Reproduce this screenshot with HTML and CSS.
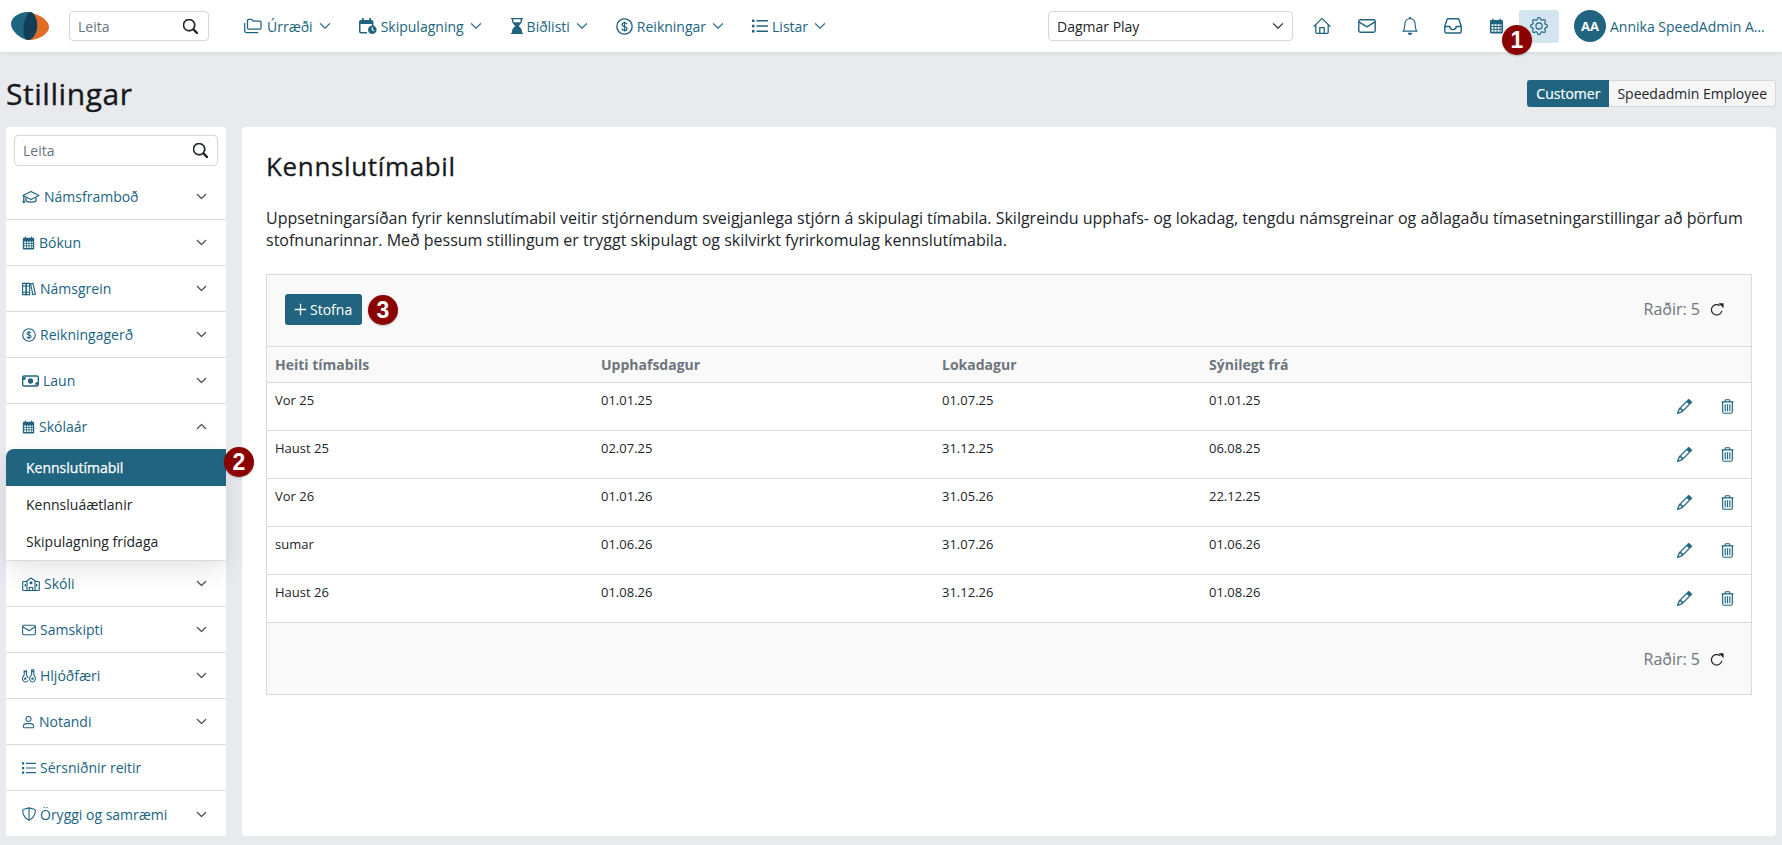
FILE: index.html
```html
<!DOCTYPE html>
<html lang="is">
<head>
<meta charset="utf-8">
<title>Stillingar</title>
<link rel="stylesheet" href="styles.css">
</head>
<body>
<svg class="sprite" xmlns="http://www.w3.org/2000/svg">
  <symbol id="i-search" viewBox="0 0 16 16"><path fill="currentColor" stroke="currentColor" stroke-width=".7" d="M11.742 10.344a6.5 6.5 0 1 0-1.397 1.398h-.001c.03.04.062.078.098.115l3.85 3.85a1 1 0 0 0 1.415-1.414l-3.85-3.85a1.007 1.007 0 0 0-.115-.1zM12 6.5a5.5 5.5 0 1 1-11 0 5.5 5.5 0 0 1 11 0z"/></symbol>
  <symbol id="i-down" viewBox="0 0 16 16"><path fill="currentColor" stroke="currentColor" stroke-width=".8" d="M1.646 4.646a.5.5 0 0 1 .708 0L8 10.293l5.646-5.647a.5.5 0 0 1 .708.708l-6 6a.5.5 0 0 1-.708 0l-6-6a.5.5 0 0 1 0-.708z"/></symbol>
  <symbol id="i-up" viewBox="0 0 16 16"><path fill="currentColor" stroke="currentColor" stroke-width=".8" d="M1.646 11.354a.5.5 0 0 0 .708 0L8 5.707l5.646 5.647a.5.5 0 0 0 .708-.708l-6-6a.5.5 0 0 0-.708 0l-6 6a.5.5 0 0 0 0 .708z"/></symbol>
  <symbol id="i-folders" viewBox="0 0 18 16"><g fill="none" stroke="currentColor" stroke-width="1.250" stroke-linejoin="round"><path d="M3.500 3V2.400c0-.6.4-1 1-1h3.200l1.500 1.600h6.800c.6 0 1 .4 1 1V10c0 .6-.4 1-1 1H4.500c-.6 0-1-.4-1-1z"/><path d="M.7 5v8c0 .9.6 1.500 1.500 1.500h12"/></g></symbol>
  <symbol id="i-calclock" viewBox="0 0 18 16"><path fill="currentColor" d="M3 0h1.700v2h5.600V0H12v2h.3c1.300 0 2.200.9 2.200 2.200V8h-1.500V6H1.500v7.300c0 .4.300.7.7.7H8v1.500H2.200C.9 15.500 0 14.600 0 13.300V4.200C0 2.900.9 2 2.200 2H3z"/><circle cx="13.300" cy="11.700" r="4.300" fill="currentColor"/><path d="M13.300 9.300v2.500l1.700 1" fill="none" stroke="#fff" stroke-width="1.100"/></symbol>
  <symbol id="i-hourglass" viewBox="0 0 14 16"><path fill="currentColor" d="M1 0h12v1.300h-1v1.500c0 2-1.500 3.700-3.300 5.200C10.500 9.500 12 11.200 12 13.200v1.500h1V16H1v-1.300h1v-1.500c0-2 1.500-3.700 3.300-5.200C3.500 6.500 2 4.800 2 2.800V1.300H1z"/><path fill="#fff" d="M3.400 1.300h7.200v1.500c0 .5-.1 1-.3 1.500H3.700c-.2-.5-.3-1-.3-1.500z"/></symbol>
  <symbol id="i-dollar" viewBox="0 0 16 16"><circle cx="8" cy="8" r="7.200" fill="none" stroke="currentColor" stroke-width="1.300"/><path fill="none" stroke="currentColor" stroke-width="1.200" d="M10.300 5.900C10 4.900 9 4.500 8 4.500c-1.200 0-2.300.6-2.300 1.800 0 2.500 4.700 1 4.700 3.500 0 1.200-1.200 1.800-2.400 1.800-1.100 0-2.200-.5-2.500-1.600M8 3.300v9.400"/></symbol>
  <symbol id="i-list" viewBox="0 0 16 16"><path fill="currentColor" d="M0 1.500h2.500V4H0zM0 6.800h2.500v2.500H0zM0 12h2.500v2.500H0zM4.500 2h11.500v1.400H4.500zM4.500 7.300h11.500v1.400H4.500zM4.500 12.600h11.500v1.400H4.500z"/></symbol>
  <symbol id="i-house" viewBox="0 0 16 16"><g fill="none" stroke="currentColor" stroke-width="1.150" stroke-linecap="round" stroke-linejoin="round"><path d="M.8 8.300 7.300 1.900a1 1 0 0 1 1.400 0l6.500 6.400"/><path d="M2.500 6.900v6.700c0 .6.400 1 1 1h9c.6 0 1-.4 1-1V6.900"/><path d="M6 14.500V9.500h4v5"/></g></symbol>
  <symbol id="i-mail" viewBox="0 0 16 16"><g fill="none" stroke="currentColor" stroke-width="1.250" stroke-linejoin="round"><rect x=".7" y="2.500" width="14.600" height="11" rx="1.400"/><path d="m.9 4.300 7.100 4.500 7.100-4.500"/></g></symbol>
  <symbol id="i-bell" viewBox="0 0 16 16"><path fill="currentColor" d="M8 16a2 2 0 0 0 2-2H6a2 2 0 0 0 2 2zM8 1.918l-.797.161A4.002 4.002 0 0 0 4 6c0 .628-.134 2.197-.459 3.742-.16.767-.376 1.566-.663 2.258h10.244c-.287-.692-.502-1.490-.663-2.258C12.134 8.197 12 6.628 12 6a4.002 4.002 0 0 0-3.203-3.920L8 1.917zM14.220 12c.223.447.481.801.78 1H1c.299-.199.557-.553.78-1C2.680 10.200 3 6.880 3 6c0-2.420 1.720-4.440 4.005-4.901a1 1 0 1 1 1.990 0A5.002 5.002 0 0 1 13 6c0 .880.320 4.200 1.220 6z"/></symbol>
  <symbol id="i-inbox" viewBox="0 0 16 16"><g fill="none" stroke="currentColor" stroke-width="1.250" stroke-linejoin="round"><path d="M3.700 1.500h8.600c.5 0 .9.300 1 .7l2 6v4.600c0 .8-.6 1.400-1.400 1.400H2.100c-.8 0-1.400-.6-1.400-1.400V8.200l2-6c.1-.4.500-.7 1-.7z"/><path d="M.8 8.500h4.400c0 3.600 5.600 3.600 5.600 0h4.400"/></g></symbol>
  <symbol id="i-cal" viewBox="0 0 16 16"><path fill="currentColor" fill-rule="evenodd" d="M3.500 0h1.300v1.500h6.400V0h1.300v1.500h1c.9 0 1.500.6 1.500 1.500v11.500c0 .9-.6 1.500-1.500 1.500h-11c-.9 0-1.500-.6-1.500-1.500V3c0-.9.6-1.500 1.500-1.500h1zM2.700 6v2h2.200V6zm3.200 0v2h2.200V6zm3.200 0v2h2.200V6zm3.100 0v2h1.100V6zM2.700 9v2h2.200V9zm3.200 0v2h2.200V9zm3.200 0v2h2.200V9zm3.100 0v2h1.100V9zM2.700 12v2h2.200v-2zm3.200 0v2h2.200v-2zm3.200 0v2h2.200v-2zm3.100 0v2h1.100v-2z"/></symbol>
  <symbol id="i-gear" viewBox="0 0 16 16"><path fill="currentColor" d="M8 4.754a3.246 3.246 0 1 0 0 6.492 3.246 3.246 0 0 0 0-6.492zM5.754 8a2.246 2.246 0 1 1 4.492 0 2.246 2.246 0 0 1-4.492 0z"/><path fill="currentColor" d="M9.796 1.343c-.527-1.790-3.065-1.790-3.592 0l-.094.319a.873.873 0 0 1-1.255.52l-.292-.16c-1.640-.892-3.433.902-2.540 2.541l.159.292a.873.873 0 0 1-.52 1.255l-.319.094c-1.790.527-1.790 3.065 0 3.592l.319.094a.873.873 0 0 1 .52 1.255l-.16.292c-.892 1.640.901 3.434 2.541 2.540l.292-.159a.873.873 0 0 1 1.255.52l.094.319c.527 1.790 3.065 1.790 3.592 0l.094-.319a.873.873 0 0 1 1.255-.52l.292.16c1.640.893 3.434-.902 2.540-2.541l-.159-.292a.873.873 0 0 1 .52-1.255l.319-.094c1.790-.527 1.790-3.065 0-3.592l-.319-.094a.873.873 0 0 1-.52-1.255l.16-.292c.893-1.640-.902-3.433-2.541-2.540l-.292.159a.873.873 0 0 1-1.255-.52l-.094-.319zm-2.633.283c.246-.835 1.428-.835 1.674 0l.094.319a1.873 1.873 0 0 0 2.693 1.115l.291-.16c.764-.415 1.600.42 1.184 1.185l-.159.292a1.873 1.873 0 0 0 1.116 2.692l.318.094c.835.246.835 1.428 0 1.674l-.319.094a1.873 1.873 0 0 0-1.115 2.693l.16.291c.415.764-.42 1.600-1.185 1.184l-.291-.159a1.873 1.873 0 0 0-2.693 1.116l-.094.318c-.246.835-1.428.835-1.674 0l-.094-.319a1.873 1.873 0 0 0-2.692-1.115l-.292.16c-.764.415-1.600-.42-1.184-1.185l.159-.291A1.873 1.873 0 0 0 1.945 8.930l-.319-.094c-.835-.246-.835-1.428 0-1.674l.319-.094A1.873 1.873 0 0 0 3.060 4.377l-.16-.292c-.415-.764.42-1.600 1.185-1.184l.292.159a1.873 1.873 0 0 0 2.692-1.115l.094-.319z"/></symbol>
  <symbol id="i-cap" viewBox="0 0 18 16"><g fill="none" stroke="currentColor" stroke-width="1.250" stroke-linejoin="round"><path d="M9 2.500 1 6.500l8 4 8-4z"/><path d="M4 8.500v3.500c1.500 1.500 8.500 1.500 10 0V8.500"/><path d="M1.800 7v5"/></g><circle cx="1.800" cy="13" r="1.300" fill="currentColor"/></symbol>
  <symbol id="i-books" viewBox="0 0 16 16"><g fill="none" stroke="currentColor" stroke-width="1.300" stroke-linejoin="round"><rect x=".7" y="1.500" width="4" height="13"/><rect x="4.700" y="1.500" width="4" height="13"/><path d="m9.800 2.200 2.800-.6 2.700 12.300-2.900.7z"/></g><path fill="currentColor" d="M.7 4h8v1.200h-8zM.7 11h8v1.200h-8z"/></symbol>
  <symbol id="i-cash" viewBox="0 0 18 16"><rect x=".7" y="2.700" width="16.600" height="10.600" rx="1.500" fill="none" stroke="currentColor" stroke-width="1.400"/><path fill="currentColor" d="M.7 4h3.500a3 3 0 0 1-3 3zM17.300 12h-3.500a3 3 0 0 1 3-3z"/><circle cx="9" cy="8" r="2.800" fill="currentColor"/></symbol>
  <symbol id="i-school" viewBox="0 0 18 16"><g fill="none" stroke="currentColor" stroke-width="1.150" stroke-linejoin="round"><path d="M5 5.500H1.500c-.5 0-.8.3-.8.800v7.400c0 .5.3.8.8.8h15c.5 0 .8-.3.8-.8V6.300c0-.5-.3-.8-.8-.8H13"/><path d="M5 14.500V4.700L9 2l4 2.700v9.800"/><path d="M7.300 14.500v-3h3.400v3"/></g><circle cx="9" cy="6.800" r="1.500" fill="currentColor"/><path fill="currentColor" d="M2.700 8h1.300v2.500H2.700zM14 8h1.300v2.500H14z"/></symbol>
  <symbol id="i-instr" viewBox="0 0 16 16"><g fill="none" stroke="currentColor" stroke-width="1.200" stroke-linejoin="round"><path d="M2.500 1v5.500L.9 9.500c-.8 2.500.6 5.300 3 5.300 1.500 0 2.500-.8 3-1.800M5 1v5.500l2.200 4"/><path d="M11 1v5.500L9 9.500c-.8 2.500.6 5.300 3 5.300s3.700-2.800 3-5.300l-1.500-3V1z"/><path d="M2.500 3H5M11 3h2.500"/></g><circle cx="3.700" cy="11" r="1.400" fill="currentColor"/><circle cx="12" cy="11" r="1.400" fill="currentColor"/></symbol>
  <symbol id="i-person" viewBox="0 0 16 16"><g fill="none" stroke="currentColor" stroke-width="1.250"><circle cx="8" cy="4.300" r="3.100"/><path d="M1.500 14.300c0-2.800 2-4.300 4-4.300h5c2 0 4 1.500 4 4.300 0 .5-.3.8-.8.8H2.300c-.5 0-.8-.3-.8-.8z"/></g></symbol>
  <symbol id="i-shield" viewBox="0 0 16 16"><path fill="none" stroke="currentColor" stroke-width="1.300" stroke-linejoin="round" d="M8 1 2 2.500c-.8.2-1.200.7-1.200 1.400C.8 9.800 4.700 13.800 8 15c3.300-1.200 7.200-5.200 7.200-11.100 0-.7-.4-1.200-1.200-1.400z"/><path fill="none" stroke="currentColor" stroke-width="1.300" d="M8 1v14"/></symbol>
  <symbol id="i-plus" viewBox="0 0 16 16"><path fill="currentColor" d="M7.200 1h1.600v6.200H15v1.600H8.800V15H7.200V8.800H1V7.200h6.200z"/></symbol>
  <symbol id="i-refresh" viewBox="0 0 16 16"><path fill="none" stroke="currentColor" stroke-width="1.400" d="M11.300 4.100A6 6 0 1 0 13.600 10"/><path fill="currentColor" d="M9.800 1.500h5.700v5.700z"/></symbol>
  <symbol id="i-pencil" viewBox="0 0 16 16"><path fill="currentColor" stroke="currentColor" stroke-width=".5" d="M12.146.146a.5.5 0 0 1 .708 0l3 3a.5.5 0 0 1 0 .708l-10 10a.5.5 0 0 1-.168.11l-5 2a.5.5 0 0 1-.65-.65l2-5a.5.5 0 0 1 .11-.168l10-10zM11.207 2.500 13.500 4.793 14.793 3.500 12.500 1.207 11.207 2.500zm1.586 3L10.500 3.207 4 9.707V10h.5a.5.5 0 0 1 .5.5v.5h.5a.5.5 0 0 1 .5.5v.5h.293l6.500-6.500zm-9.761 5.175-.106.106-1.528 3.821 3.821-1.528.106-.106A.5.5 0 0 1 5 12.500V12h-.5a.5.5 0 0 1-.5-.5V11h-.5a.5.5 0 0 1-.468-.325z"/><path fill="currentColor" d="m11 2.500 1.500-2 3 3-2 1.500z"/></symbol>
  <symbol id="i-trash" viewBox="0 0 14 16"><g fill="none" stroke="currentColor" stroke-width="1.250" stroke-linejoin="round"><path d="M.6 3h12.800M4.500 3V1.500c0-.4.3-.8.8-.8h3.400c.5 0 .8.400.8.8V3"/><path d="M1.800 3v10.700c0 .9.600 1.600 1.500 1.600h7.400c.9 0 1.500-.7 1.500-1.600V3"/><path d="M4.500 5.500v7.500M7 5.500v7.500M9.500 5.500v7.500"/></g></symbol>
</svg>

<header class="topbar">
  <svg class="logo" viewBox="0 0 38 28" xmlns="http://www.w3.org/2000/svg" aria-label="Logo">
    <path fill="#e06c25" d="M16 1C26 0 38 8 38 15c0 7-11 13-20 13-3 0-5-1-6-3z"/>
    <path fill="#1f6480" d="M20 0C11-1 0 4 0 12c0 7 9 14 16 16 6-5 8-22 4-28z"/>
    <path fill="#123f57" d="M20 0c5 2 7 10 6 17-1 5-4 10-8 11-2 0-3-1-4-2-2-4-2-12 0-18 1-4 3-7 6-8z"/>
  </svg>
  <label class="search search-top">
    <span class="search-text">Leita</span>
    <svg class="ic-search"><use href="#i-search"/></svg>
  </label>
  <nav class="mainnav">
    <a class="navitem"><svg class="ic ic-w18 ic-m5"><use href="#i-folders"/></svg>Úrræði<svg class="chev"><use href="#i-down"/></svg></a>
    <a class="navitem"><svg class="ic ic-w18"><use href="#i-calclock"/></svg>Skipulagning<svg class="chev"><use href="#i-down"/></svg></a>
    <a class="navitem"><svg class="ic ic-w14"><use href="#i-hourglass"/></svg>Biðlisti<svg class="chev"><use href="#i-down"/></svg></a>
    <a class="navitem"><svg class="ic ic-w17"><use href="#i-dollar"/></svg>Reikningar<svg class="chev"><use href="#i-down"/></svg></a>
    <a class="navitem"><svg class="ic"><use href="#i-list"/></svg>Listar<svg class="chev"><use href="#i-down"/></svg></a>
  </nav>
  <div class="topright">
    <div class="select"><span>Dagmar Play</span><svg class="select-chev"><use href="#i-down"/></svg></div>
    <div class="iconbar">
      <a class="iconbtn"><svg class="ic-top ic-house"><use href="#i-house"/></svg></a>
      <a class="iconbtn"><svg class="ic-top"><use href="#i-mail"/></svg></a>
      <a class="iconbtn"><svg class="ic-top"><use href="#i-bell"/></svg></a>
      <a class="iconbtn"><svg class="ic-top"><use href="#i-inbox"/></svg></a>
      <a class="iconbtn"><svg class="ic-top ic-cal"><use href="#i-cal"/></svg></a>
      <a class="iconbtn is-active"><svg class="ic-top"><use href="#i-gear"/></svg><span class="badge badge-1">1</span></a>
    </div>
    <div class="user"><span class="avatar">AA</span><span class="username">Annika SpeedAdmin Admin</span></div>
  </div>
</header>

<div class="titlebar">
  <h1 class="pagetitle">Stillingar</h1>
  <div class="toggle"><span class="toggle-on">Customer</span><span class="toggle-off">Speedadmin Employee</span></div>
</div>

<div class="content">
  <aside class="sidebar">
    <div class="side-search">
      <label class="search search-side">
        <span class="search-text">Leita</span>
        <svg class="ic-search"><use href="#i-search"/></svg>
      </label>
    </div>
    <a class="siderow"><span class="sidelabel"><svg class="ic ic-w18"><use href="#i-cap"/></svg>Námsframboð</span><svg class="sidechev"><use href="#i-down"/></svg></a>
    <a class="siderow"><span class="sidelabel"><svg class="ic ic-s13"><use href="#i-cal"/></svg>Bókun</span><svg class="sidechev"><use href="#i-down"/></svg></a>
    <a class="siderow"><span class="sidelabel"><svg class="ic ic-s14"><use href="#i-books"/></svg>Námsgrein</span><svg class="sidechev"><use href="#i-down"/></svg></a>
    <a class="siderow"><span class="sidelabel"><svg class="ic ic-s14"><use href="#i-dollar"/></svg>Reikningagerð</span><svg class="sidechev"><use href="#i-down"/></svg></a>
    <a class="siderow"><span class="sidelabel"><svg class="ic ic-w16"><use href="#i-cash"/></svg>Laun</span><svg class="sidechev"><use href="#i-down"/></svg></a>
    <a class="siderow siderow-open"><span class="sidelabel"><svg class="ic ic-s13"><use href="#i-cal"/></svg>Skólaár</span><svg class="sidechev"><use href="#i-up"/></svg></a>
    <div class="subgroup">
      <a class="subitem is-current">Kennslutímabil<span class="badge badge-2">2</span></a>
      <a class="subitem">Kennsluáætlanir</a>
      <a class="subitem">Skipulagning frídaga</a>
    </div>
    <a class="siderow"><span class="sidelabel"><svg class="ic ic-w18"><use href="#i-school"/></svg>Skóli</span><svg class="sidechev"><use href="#i-down"/></svg></a>
    <a class="siderow"><span class="sidelabel"><svg class="ic ic-s14"><use href="#i-mail"/></svg>Samskipti</span><svg class="sidechev"><use href="#i-down"/></svg></a>
    <a class="siderow"><span class="sidelabel"><svg class="ic ic-s14"><use href="#i-instr"/></svg>Hljóðfæri</span><svg class="sidechev"><use href="#i-down"/></svg></a>
    <a class="siderow"><span class="sidelabel"><svg class="ic ic-s13"><use href="#i-person"/></svg>Notandi</span><svg class="sidechev"><use href="#i-down"/></svg></a>
    <a class="siderow"><span class="sidelabel"><svg class="ic ic-s14"><use href="#i-list"/></svg>Sérsniðnir reitir</span></a>
    <a class="siderow siderow-last"><span class="sidelabel"><svg class="ic ic-s14"><use href="#i-shield"/></svg>Öryggi og samræmi</span><svg class="sidechev"><use href="#i-down"/></svg></a>
  </aside>

  <main class="panel">
    <h2 class="paneltitle">Kennslutímabil</h2>
    <p class="intro">Uppsetningarsíðan fyrir kennslutímabil veitir stjórnendum sveigjanlega stjórn á skipulagi tímabila. Skilgreindu upphafs- og lokadag, tengdu námsgreinar og aðlagaðu tímasetningarstillingar að þörfum stofnunarinnar. Með þessum stillingum er tryggt skipulagt og skilvirkt fyrirkomulag kennslutímabila.</p>
    <section class="grid">
      <div class="gridbar">
        <div class="gridbar-left">
          <button class="btn"><svg class="ic-plus"><use href="#i-plus"/></svg>Stofna</button>
          <span class="badge badge-3">3</span>
        </div>
        <div class="rowcount"><span>Raðir: 5</span><svg class="ic-refresh"><use href="#i-refresh"/></svg></div>
      </div>
      <table class="tbl">
        <colgroup><col class="col-a"><col class="col-b"><col class="col-c"><col class="col-d"><col></colgroup>
        <thead>
          <tr><th>Heiti tímabils</th><th>Upphafsdagur</th><th>Lokadagur</th><th>Sýnilegt frá</th><th></th></tr>
        </thead>
        <tbody>
          <tr><td>Vor 25</td><td>01.01.25</td><td>01.07.25</td><td>01.01.25</td><td class="acts"><div class="actwrap"><svg class="ic-pencil"><use href="#i-pencil"/></svg><svg class="ic-trash"><use href="#i-trash"/></svg></div></td></tr>
          <tr><td>Haust 25</td><td>02.07.25</td><td>31.12.25</td><td>06.08.25</td><td class="acts"><div class="actwrap"><svg class="ic-pencil"><use href="#i-pencil"/></svg><svg class="ic-trash"><use href="#i-trash"/></svg></div></td></tr>
          <tr><td>Vor 26</td><td>01.01.26</td><td>31.05.26</td><td>22.12.25</td><td class="acts"><div class="actwrap"><svg class="ic-pencil"><use href="#i-pencil"/></svg><svg class="ic-trash"><use href="#i-trash"/></svg></div></td></tr>
          <tr><td>sumar</td><td>01.06.26</td><td>31.07.26</td><td>01.06.26</td><td class="acts"><div class="actwrap"><svg class="ic-pencil"><use href="#i-pencil"/></svg><svg class="ic-trash"><use href="#i-trash"/></svg></div></td></tr>
          <tr><td>Haust 26</td><td>01.08.26</td><td>31.12.26</td><td>01.08.26</td><td class="acts"><div class="actwrap"><svg class="ic-pencil"><use href="#i-pencil"/></svg><svg class="ic-trash"><use href="#i-trash"/></svg></div></td></tr>
        </tbody>
      </table>
      <div class="gridfoot">
        <div class="rowcount"><span>Raðir: 5</span><svg class="ic-refresh"><use href="#i-refresh"/></svg></div>
      </div>
    </section>
  </main>
</div>
</body>
</html>
```
FILE: styles.css
```css
* { box-sizing: border-box; }
html, body { height: 100%; }
body {
  margin: 0;
  height: 845px;
  overflow: hidden;
  display: flex;
  flex-direction: column;
  background: #e9eaee;
  color: #212529;
  font-family: "Open Sans", "Noto Sans", sans-serif;
  font-size: 14px;
}
.sprite { display: none; }

/* top bar */
.topbar {
  height: 52px;
  flex: none;
  display: flex;
  align-items: center;
  background: #fff;
  box-shadow: 0 1px 4px rgba(0,0,0,.08);
  position: relative;
  padding-left: 11px;
}
.logo { width: 38px; height: 28px; flex: none; }
.search {
  display: flex;
  align-items: center;
  justify-content: space-between;
  background: #fff;
  border: 1px solid #d5d7db;
  border-radius: 4px;
  color: #6c757d;
}
.search-text { font-size: 14px; }
.ic-search { width: 15px; height: 15px; color: #16191c; flex: none; }
.search-top { width: 140px; height: 30px; margin-left: 20px; padding: 0 10px 0 8px; }
.mainnav { display: flex; align-items: center; margin-left: 35px; }
.navitem {
  display: flex;
  align-items: center;
  color: #20647f;
  margin-right: 28px;
  white-space: nowrap;
}
.ic { width: 16px; height: 16px; flex: none; margin-right: 4px; color: #20647f; }
.ic-w18 { width: 18px; }
.ic-m5 { margin-right: 5px; }
.ic-w17 { width: 17px; height: 17px; }
.ic-w16 { width: 17px; }
.ic-w14 { width: 14px; margin-right: 3px; }
.ic-s13 { width: 13px; height: 14px; }
.ic-s14 { width: 14px; height: 14px; }
.chev { width: 12px; height: 12px; margin-left: 6px; color: #20647f; flex: none; }
.topright { margin-left: auto; display: flex; align-items: center; padding-right: 17px; }
.select {
  width: 245px;
  height: 30px;
  display: flex;
  align-items: center;
  justify-content: space-between;
  border: 1px solid #d5d7db;
  border-radius: 4px;
  padding: 0 8px;
  color: #212529;
}
.select-chev { width: 12px; height: 12px; color: #212529; }
.iconbar { display: flex; align-items: center; gap: 3px; margin-left: 11px; }
.iconbtn {
  width: 40px;
  height: 33px;
  display: flex;
  align-items: center;
  justify-content: center;
  border-radius: 3px;
  color: #20647f;
  position: relative;
}
.iconbtn.is-active { background: #d4e5ef; }
.ic-top { width: 18px; height: 18px; }
.ic-house { margin-right: 4px; }
.ic-cal { width: 15px; height: 16px; }
.user { display: flex; align-items: center; margin-left: 15px; }
.avatar {
  width: 32px;
  height: 32px;
  border-radius: 50%;
  background: #20647f;
  color: #fff;
  font-weight: 700;
  font-size: 13px;
  display: flex;
  align-items: center;
  justify-content: center;
  flex: none;
}
.username {
  width: 155px;
  margin-left: 4px;
  color: #20647f;
  white-space: nowrap;
  overflow: hidden;
  text-overflow: ellipsis;
}

/* badges */
.badge {
  position: absolute;
  width: 30px;
  height: 30px;
  border-radius: 50%;
  background: #8b0000;
  color: #fff;
  font-family: "Liberation Sans", Arial, sans-serif;
  font-weight: 700;
  font-size: 23px;
  line-height: 30px;
  text-align: center;
  box-shadow: 0 1px 2px rgba(0,0,0,.25);
  z-index: 5;
  -webkit-text-stroke: 0;
}
.badge-1 { left: -17px; top: 15px; }
.badge-2 { right: -28px; top: -2px; }
.badge-3 { left: 83px; top: 1px; }

/* title */
.titlebar {
  flex: none;
  height: 75px;
  display: flex;
  align-items: flex-start;
  justify-content: space-between;
  padding: 28px 6px 0;
}
.pagetitle {
  margin: 0;
  font-size: 30px;
  font-weight: 400;
  line-height: 27px;
  letter-spacing: .55px;
  -webkit-text-stroke: .35px #16191c;
  color: #16191c;
}
.toggle { display: flex; height: 27px; line-height: 25px; }
.toggle-on {
  background: #20647f;
  color: #fff;
  padding: 1px 9px;
  -webkit-text-stroke: .2px #fff;
  border-radius: 3px 0 0 3px;
}
.toggle-off {
  background: #f6f6f7;
  border: 1px solid #d5d7db;
  border-left: 0;
  padding: 0 8px;
  border-radius: 0 3px 3px 0;
}

/* layout */
.content { flex: 1; min-height: 0; display: flex; gap: 16px; padding: 0 6px 9px; }

/* sidebar */
.sidebar {
  width: 220px;
  flex: none;
  background: #fff;
  border-radius: 4px 4px 0 0;
  display: flex;
  flex-direction: column;
}
.side-search { padding: 8px 8px 8px; }
.search-side { height: 31px; padding: 0 9px 0 8px; }
.siderow {
  height: 46px;
  flex: none;
  display: flex;
  align-items: center;
  justify-content: space-between;
  padding: 0 19px 0 16px;
  border-bottom: 1px solid #d9dadd;
  color: #20647f;
  white-space: nowrap;
}
.siderow-last { border-bottom: 0; }
.siderow-open { border-bottom: 0; height: 45px; }
.sidelabel { display: flex; align-items: center; }
.sidechev { width: 11px; height: 11px; color: #2b3035; }
.subgroup {
  position: relative;
  border-bottom: 1px solid #d9dadd;
  border-radius: 8px 0 0 0;
  box-shadow: 0 8px 24px rgba(0,0,0,.11);
  background: #fff;
}
.subitem {
  display: flex;
  align-items: center;
  height: 37px;
  padding-left: 20px;
  color: #212529;
  position: relative;
}
.is-current {
  background: #20647f;
  color: #fff;
  -webkit-text-stroke: .25px #fff;
  border-radius: 8px 0 0 0;
}

/* panel */
.panel {
  flex: 1;
  min-width: 0;
  background: #fff;
  border-radius: 4px;
  padding: 24px 24px 0;
}
.paneltitle {
  margin: 0 0 26px;
  font-size: 26px;
  font-weight: 400;
  line-height: 30px;
  letter-spacing: .65px;
  -webkit-text-stroke: .3px #16191c;
  color: #16191c;
}
.intro { margin: 0 0 22px; font-size: 16px; line-height: 22.4px; color: #212529; }
.grid { border: 1px solid #d8d9de; }
.gridbar {
  height: 72px;
  display: flex;
  align-items: center;
  justify-content: space-between;
  padding: 0 0 2px 18px;
  background: #f9f9fa;
  border-bottom: 1px solid #d8d9de;
}
.gridbar-left { position: relative; display: flex; }
.btn {
  display: flex;
  align-items: center;
  height: 31px;
  width: 77px;
  padding: 0 0 0 9px;
  border: 0;
  border-radius: 3px;
  background: #20647f;
  color: #fff;
  font: 14px "Open Sans", sans-serif;
}
.ic-plus { width: 13px; height: 13px; margin-right: 3px; flex: none; }
.rowcount {
  display: flex;
  align-items: center;
  padding-right: 27px;
  font-size: 16px;
  color: #6c757d;
}
.ic-refresh { width: 14px; height: 14px; margin-left: 10px; color: #212529; }
.tbl { width: 100%; border-collapse: collapse; table-layout: fixed; }
.col-a { width: 326px; }
.col-b { width: 341px; }
.col-c { width: 267px; }
.col-d { width: 300px; }
.tbl th {
  height: 36px;
  padding: 0 8px;
  text-align: left;
  font-weight: 700;
  color: #6c757d;
  background: #f9f9fa;
  border-bottom: 1px solid #d8d9de;
}
.tbl td {
  height: 48px;
  padding: 7px 8px 8px;
  vertical-align: top;
  line-height: 20px;
  font-size: 13px;
  border-bottom: 1px solid #d8d9de;
}
.tbl td.acts { vertical-align: middle; padding: 0; }
.actwrap { display: flex; justify-content: flex-end; align-items: center; gap: 29px; padding-right: 17px; color: #20647f; }
.ic-pencil { width: 15px; height: 15px; }
.ic-trash { width: 13px; height: 15px; }
.gridfoot {
  height: 71px;
  display: flex;
  align-items: center;
  justify-content: flex-end;
  background: #f9f9fa;
}
```
